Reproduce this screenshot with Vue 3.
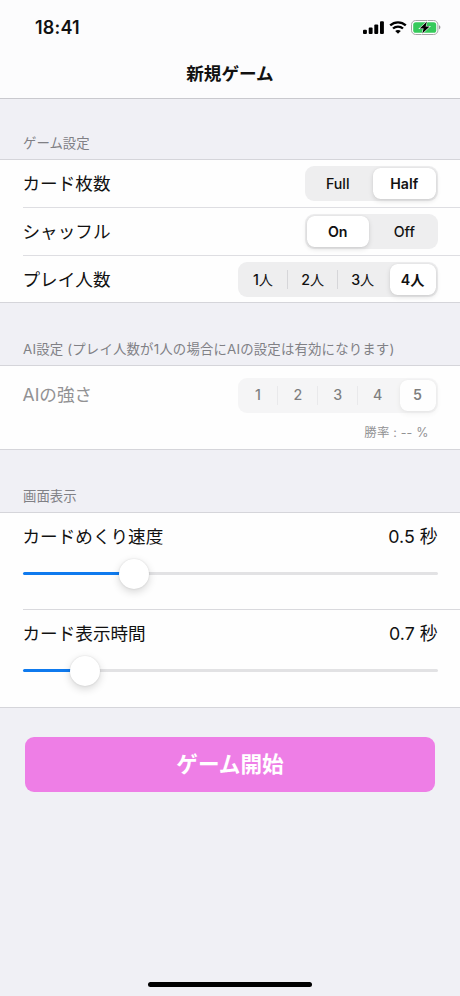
<script setup>
import { ref } from 'vue'

const gameRows = ref([
  { label: 'カード枚数', options: ['Full', 'Half'], unit: '', selected: 1, size: 'pair' },
  { label: 'シャッフル', options: ['On', 'Off'], unit: '', selected: 0, size: 'pair' },
  { label: 'プレイ人数', options: ['1', '2', '3', '4'], unit: '人', selected: 3, size: 'wide' },
])
const levels = ['1', '2', '3', '4', '5']
const level = ref(4)
const sliders = [
  { label: 'カードめくり速度', value: '0.5 秒', position: 26.85 },
  { label: 'カード表示時間', value: '0.7 秒', position: 15.1 },
]
</script>

<template>
  <div class="screen">
    <header class="top">
      <div class="status">
        <span class="clock">18:41</span>
        <div class="status-icons">
          <svg class="signal" width="21" height="13" viewBox="0 0 21 13">
            <rect x="0" y="8.8" width="3.9" height="4.2" rx="1" />
            <rect x="5.7" y="6.4" width="3.9" height="6.6" rx="1" />
            <rect x="11.3" y="3.4" width="3.9" height="9.6" rx="1" />
            <rect x="17" y="0.2" width="3.9" height="12.8" rx="1" />
          </svg>
          <svg class="wifi" width="18" height="13" viewBox="0 0 18 13">
            <path d="M1.2 4.4 C5.6 0.3 12.4 0.3 16.8 4.4" />
            <path d="M4 7.5 C6.8 4.9 11.2 4.9 14 7.5" />
            <path class="dot" d="M9 12.8 L6.2 10 C7.8 8.6 10.2 8.6 11.8 10 Z" />
          </svg>
          <svg class="battery" width="30" height="15" viewBox="0 0 30 15">
            <rect x="0.5" y="0.5" width="26.4" height="14" rx="4.2" fill="#fff" stroke="#a5a5a5" />
            <rect x="2.2" y="2.2" width="23" height="10.6" rx="2.6" fill="#36ca5b" />
            <path d="M28.1 5.3 C29.8 6 29.8 8.8 28.1 9.5 Z" fill="#888" />
            <path d="M16 1.6 L8.7 8.4 H12.6 L11.3 13.4 L18.6 6.6 H14.6 Z" fill="#000" stroke="#fff" stroke-width="1.1" paint-order="stroke" />
          </svg>
        </div>
      </div>
      <h1 class="title">新規ゲーム</h1>
    </header>

    <h2 class="caption first">ゲーム設定</h2>
    <section class="group game">
      <div v-for="row in gameRows" :key="row.label" class="row">
        <span class="label">{{ row.label }}</span>
        <div class="segments" :class="row.size">
          <button
            v-for="(option, i) in row.options"
            :key="option"
            class="segment"
            :class="{ on: i === row.selected, split: i > 0 && i !== row.selected && i - 1 !== row.selected }"
            @click="row.selected = i"
          >{{ option }}<span v-if="row.unit" class="unit">{{ row.unit }}</span></button>
        </div>
      </div>
    </section>

    <h2 class="caption second">AI設定 (プレイ人数が1人の場合にAIの設定は有効になります)</h2>
    <section class="group ai">
      <div class="ai-line">
        <span class="label">AIの強さ</span>
        <div class="segments wide faded">
          <button
            v-for="(option, i) in levels"
            :key="option"
            class="segment"
            :class="{ on: i === level, split: i > 0 && i !== level && i - 1 !== level }"
            disabled
          >{{ option }}</button>
        </div>
      </div>
      <p class="rate">勝率 : -- %</p>
    </section>

    <h2 class="caption third">画面表示</h2>
    <section class="group display">
      <div v-for="slider in sliders" :key="slider.label" class="slider-row">
        <div class="slider-head">
          <span class="label">{{ slider.label }}</span>
          <span class="value">{{ slider.value }}</span>
        </div>
        <div class="slider">
          <div class="fill" :style="{ width: slider.position + '%' }"></div>
          <div class="knob"></div>
          <div class="rest"></div>
        </div>
      </div>
    </section>

    <button class="start">ゲーム開始</button>
    <div class="home"></div>
  </div>
</template>

<style>
body {
  margin: 0;
  background: #f0f0f5;
}
</style>

<style scoped>
.screen {
  box-sizing: border-box;
  display: flex;
  flex-direction: column;
  width: 460px;
  height: 996px;
  overflow: hidden;
  background: #f0f0f5;
  color: #111;
  font-family: Inter, "Noto Sans CJK JP", sans-serif;
}
.top {
  box-sizing: border-box;
  height: 99px;
  flex: none;
  background: #fcfcfd;
  border-bottom: 1px solid #c9c9ce;
}
.status {
  display: flex;
  justify-content: space-between;
  height: 56px;
  box-sizing: border-box;
  padding: 18px 19px 0 35px;
}
.clock {
  font-size: 18px;
  line-height: 20px;
  font-weight: 600;
  letter-spacing: 0.2px;
}
.status-icons {
  display: flex;
  align-items: flex-start;
  padding-top: 3px;
}
.signal {
  margin-right: 5px;
}
.wifi {
  margin-right: 4.5px;
  fill: none;
  stroke: #000;
  stroke-width: 2.3;
}
.wifi .dot {
  fill: #000;
  stroke: none;
}
.battery {
  margin-top: -1px;
}
.title {
  margin: 7px 0 0;
  text-align: center;
  font-size: 17.6px;
  line-height: 22px;
  font-weight: 700;
}
.caption {
  box-sizing: border-box;
  flex: none;
  margin: 0;
  padding-left: 23px;
  color: #808085;
  font-size: 13.4px;
  line-height: 20px;
  font-weight: 400;
  white-space: nowrap;
}
.first {
  height: 60px;
  padding-top: 34px;
}
.second {
  height: 62px;
  padding-top: 36px;
  letter-spacing: 0.17px;
}
.third {
  height: 62px;
  padding-top: 36px;
}
.group {
  box-sizing: border-box;
  flex: none;
  background: #fefefe;
  border-top: 1px solid #d5d5da;
  border-bottom: 1px solid #d5d5da;
}
.game {
  height: 144px;
  padding-left: 22.5px;
}
.row {
  box-sizing: border-box;
  display: flex;
  align-items: center;
  justify-content: space-between;
  height: 48px;
  padding: 0 22.5px 0 0;
  border-bottom: 1px solid #dedee2;
}
.row:last-child {
  height: 47px;
  border-bottom: 0;
}
.label {
  font-size: 17.6px;
  line-height: 24px;
}
.segments {
  box-sizing: border-box;
  display: flex;
  height: 34.6px;
  padding: 2px 0;
  border-radius: 9px;
  background: #eeeeef;
}
.pair {
  width: 133px;
}
.wide {
  width: 199.5px;
}
.segment {
  position: relative;
  flex: 1;
  min-width: 0;
  margin: 0 2px;
  padding: 0;
  border: 0;
  border-radius: 7.5px;
  background: transparent;
  color: #111;
  font: 500 14.2px/30px Inter, "Noto Sans CJK JP", sans-serif;
}
.unit {
  font-weight: 400;
}
.segment.on {
  background: #fff;
  font-weight: 600;
  box-shadow: 0 2px 5px rgba(0, 0, 0, 0.13), 0 0 1px rgba(0, 0, 0, 0.12);
}
.on .unit {
  font-weight: 700;
}
.segment.split::before {
  content: "";
  position: absolute;
  left: -2.5px;
  top: 6px;
  bottom: 6px;
  width: 1px;
  background: #d6d6d9;
}
.ai {
  height: 85px;
  padding: 12px 22.5px 0;
}
.ai-line {
  display: flex;
  align-items: center;
  justify-content: space-between;
}
.ai .label {
  color: #929294;
}
.faded {
  opacity: 0.5;
}
.faded .segment {
  color: #000;
}
.rate {
  margin: 10px 9px 0 0;
  color: #929294;
  text-align: right;
  font-size: 12.4px;
  line-height: 20px;
  letter-spacing: 0.2px;
}
.display {
  height: 196px;
  padding-left: 22.5px;
}
.slider-row {
  box-sizing: border-box;
  height: 96px;
  padding: 12px 22.5px 0 0;
}
.slider-row + .slider-row {
  border-top: 1px solid #d9d9dd;
  height: 98px;
}
.slider-head {
  display: flex;
  justify-content: space-between;
  line-height: 24px;
}
.value {
  font-size: 17.8px;
}
.slider {
  display: flex;
  align-items: center;
  height: 30px;
  margin-top: 9.5px;
}
.fill {
  flex: none;
  height: 3px;
  border-radius: 2px;
  background: #0f7aee;
}
.knob {
  flex: none;
  width: 30px;
  height: 30px;
  margin: 0 -15px;
  z-index: 1;
  border-radius: 50%;
  background: #fff;
  box-shadow: 0 3px 9px rgba(0, 0, 0, 0.16), 0 0 2px rgba(0, 0, 0, 0.12);
}
.rest {
  flex: 1;
  height: 3px;
  border-radius: 2px;
  background: #e2e2e4;
}
.start {
  flex: none;
  height: 55px;
  margin: 28.5px 25px 0;
  padding: 0;
  border: 0;
  border-radius: 9px;
  background: #ee7ee6;
  color: #fff;
  font: 700 21.6px/54px Inter, "Noto Sans CJK JP", sans-serif;
}
.home {
  flex: none;
  width: 164px;
  height: 5px;
  margin: auto auto 9.5px;
  border-radius: 3px;
  background: #000;
}
</style>
